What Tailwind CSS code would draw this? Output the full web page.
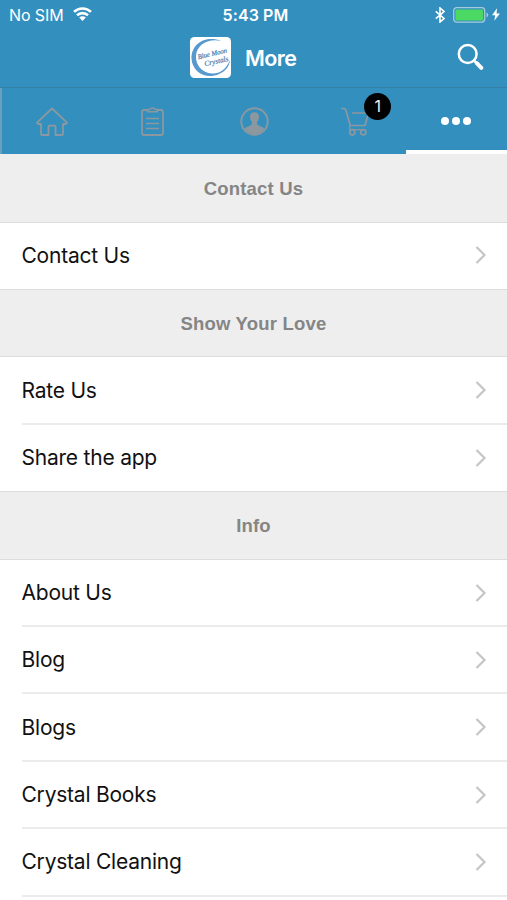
<!DOCTYPE html>
<html lang="en">
<head>
<meta charset="utf-8">
<title>More</title>
<script src="https://cdn.jsdelivr.net/npm/@tailwindcss/browser@4"></script>
</head>
<body class="w-[507px] h-[900px] overflow-hidden bg-white text-[#111] font-['Inter','Liberation_Sans',sans-serif]">
<header class="bg-[#338fbe] text-white h-[87px] flex flex-col">
  <div class="grid grid-cols-3 h-[30px] items-center px-[9px] text-[16px] leading-[30px]">
    <div class="flex items-center gap-[9px]"><span class="tracking-[-0.1px]">No SIM</span>
      <svg class="w-[19px] h-[14px] -mt-[2px]" viewBox="0 0 19 14"><g fill="none" stroke="#fff" stroke-width="2.6"><path d="M1 4.900a12.200 12.200 0 0 1 17 0M4 8.300a8 8 0 0 1 11 0"/></g><path d="M6.200 10.500a4.700 4.700 0 0 1 6.600 0L9.500 14z" fill="#fff"/></svg>
    </div>
    <div class="text-center font-semibold tracking-[0.1px] pl-[4px]">5:43 PM</div>
    <div class="flex items-center justify-end -mr-[2px]">
      <svg class="w-[10px] h-[16px] mr-[8px] -mt-px" viewBox="0 0 10 16" fill="none" stroke="#fff" stroke-width="1.6"><path d="M.8 4.300 9 11.500 5 15V1l4 3.500-8.200 7.200"/></svg>
      <svg class="w-[36px] h-[16px] mr-[3px]" viewBox="0 0 36 16"><rect x=".7" y=".7" width="31" height="14.400" rx="3" fill="none" stroke="#a5cbe0" stroke-width="1.300"/><rect x="2.400" y="2.400" width="27.600" height="11" rx="1" fill="#4bd863"/><path d="M33.500 5.500c2.300.8 2.300 4 0 4.900z" fill="#a5cbe0"/></svg>
      <svg class="w-[8px] h-[13px] -mt-[2px]" viewBox="0 0 8 13"><path d="M5 .3 0 7.300h3.200L2.300 12.700 8 5.500H4.600z" fill="#fff"/></svg>
    </div>
  </div>
  <div class="h-[57px] flex items-center pl-[190px] pr-[23px] pb-[2px]">
    <svg class="w-[41px] h-[41px] overflow-visible" viewBox="0 0 41 41"><rect width="41" height="41" rx="4.500" fill="#fff"/><path d="M31 4C17-2 1 6 1.500 21.500 2 35 16 43 29 37 36 34 39.500 29 40 23 36 33 29 37 22 36.500 12 36 5.500 28 6 19 6.500 8 18 1 31 4z" fill="#5599cf"/><g transform="rotate(-13 22 20)" fill="#3373a8" stroke="#3373a8" stroke-width=".15" font-family="Liberation Serif" font-style="italic"><text x="8" y="19" font-size="6.800">Blue Moon</text><text x="13" y="27.500" font-size="7.400">Crystals</text></g></svg>
    <h1 class="ml-[14px] text-[21.500px] leading-[28px] font-semibold tracking-[-0.6px]">More</h1>
    <svg class="ml-auto w-[27px] h-[28px] -mt-[1px]" viewBox="0 0 27 28" fill="none" stroke="#fff"><circle cx="10.700" cy="11" r="8.900" stroke-width="2.500"/><path d="m17.500 18 2 2" stroke-width="2.600"/><path d="m20 20.300 4.300 4.500" stroke-width="4" stroke-linecap="round"/></svg>
  </div>
</header>
<nav class="h-[67px] bg-[#338fbe] border-t border-[#357fa5] grid grid-cols-5">
  <div class="flex items-center justify-center border-l-2 border-[#6ba0bc]">
    <svg class="w-[32px] h-[29px]" viewBox="0 0 32 29" fill="none" stroke="#8c989f" stroke-width="1.800" stroke-linejoin="round"><path d="m16 1.500 15 14.200-1.300 1.300H27v9.700q0 1.300-1.300 1.300h-6.200v-8.500q0-.9-.9-.9h-5.200q-.9 0-.9.900V28H6.300Q5 28 5 26.700V17H2.300L1 15.700z"/></svg>
  </div>
  <div class="flex items-center justify-center">
    <svg class="w-[23px] h-[29px]" viewBox="0 0 23 29" fill="none" stroke="#8c989f" stroke-width="1.800"><path d="M6.500 3H3Q1 3 1 5v21q0 2 2 2h17q2 0 2-2V5q0-2-2-2h-3.500"/><path d="M6.500 4.800V2.500H9Q9.500 1 11.500 1t2.500 1.500h2.500v2.300zM5 11.500h13M5 16.500h13M5 21.500h13" stroke-width="1.400"/></svg>
  </div>
  <div class="flex items-center justify-center pl-[2px]">
    <svg class="w-[29px] h-[29px]" viewBox="0 0 29 29"><circle cx="14.500" cy="14.500" r="13.200" fill="none" stroke="#8c989f" stroke-width="1.900"/><path d="M14.500 5.200c3.200 0 4.700 2.200 4.500 5-.1 2.300-1 3.700-2 4.700v2.300c1 1.600 5.700 2 7.500 4.600-2.300 3.500-6 5.400-10 5.400s-7.700-1.900-10-5.400c1.800-2.600 6.500-3 7.500-4.600v-2.300c-1-1-1.900-2.400-2-4.700-.2-2.800 1.300-5 4.500-5z" fill="#8c989f"/></svg>
  </div>
  <div class="flex items-center justify-center relative">
    <svg class="w-[30px] h-[29px]" viewBox="0 0 30 29" fill="none" stroke="#8c989f" stroke-width="1.700"><path d="M1 1.500h2.500Q5.300 1.500 5.800 3l4.500 15.500H25L28.500 6H12"/><path d="M10.300 18.500q-2 3 .7 4.200h13.300" stroke-width="1.300"/><circle cx="12.300" cy="25.300" r="2.600"/><circle cx="23.300" cy="25.300" r="2.600"/></svg>
    <span class="absolute left-[60px] top-[4.500px] w-[27px] h-[27px] rounded-full bg-black text-[#f1f1f1] text-[16px] leading-[27px] text-center">1</span>
  </div>
  <div class="flex items-center justify-center gap-[3px] relative border-b-4 border-white pt-[3px]">
    <i class="size-[8px] rounded-full bg-white"></i><i class="size-[8px] rounded-full bg-white"></i><i class="size-[8px] rounded-full bg-white"></i>
  </div>
</nav>
<main id="list" class="text-[21px]"></main>
<script>
const sections = [
  ['Contact Us', ['Contact Us']],
  ['Show Your Love', ['Rate Us', 'Share the app']],
  ['Info', ['About Us', 'Blog', 'Blogs', 'Crystal Books', 'Crystal Cleaning']]
];
const chevron = '<svg class="w-[12px] h-[18px] mr-[20px]" viewBox="0 0 12 18" fill="none" stroke="#c5c5c8" stroke-width="2.2"><path d="m1.500 1 8 8-8 8"/></svg>';
document.getElementById('list').innerHTML = sections.map(([title, rows], s) =>
  `<section><h2 class="${s ? 'h-[68.4px] border-t' : 'h-[68.7px]'} pt-[2px] bg-[#eee] border-b border-[#dcdcdc] flex items-center justify-center text-[18.5px] leading-[24px] font-bold text-[#858585] font-['Liberation_Sans',sans-serif] tracking-[0.2px]"><span>${title}</span></h2>` +
  rows.map((r, i) => {
    const divided = i < rows.length - 1 || s === 2;
    return `<div class="${divided ? 'h-[67.4px]' : 'h-[66.4px]'} pl-[21.5px]"><div class="h-full flex items-center justify-between ${divided ? 'pt-[0.6px] border-b-2 border-[#ebebeb]' : 'pb-px'}"><span class="tracking-[-0.22px]">${r}</span>${chevron}</div></div>`;
  }).join('') + '</section>').join('');
</script>
</body>
</html>
